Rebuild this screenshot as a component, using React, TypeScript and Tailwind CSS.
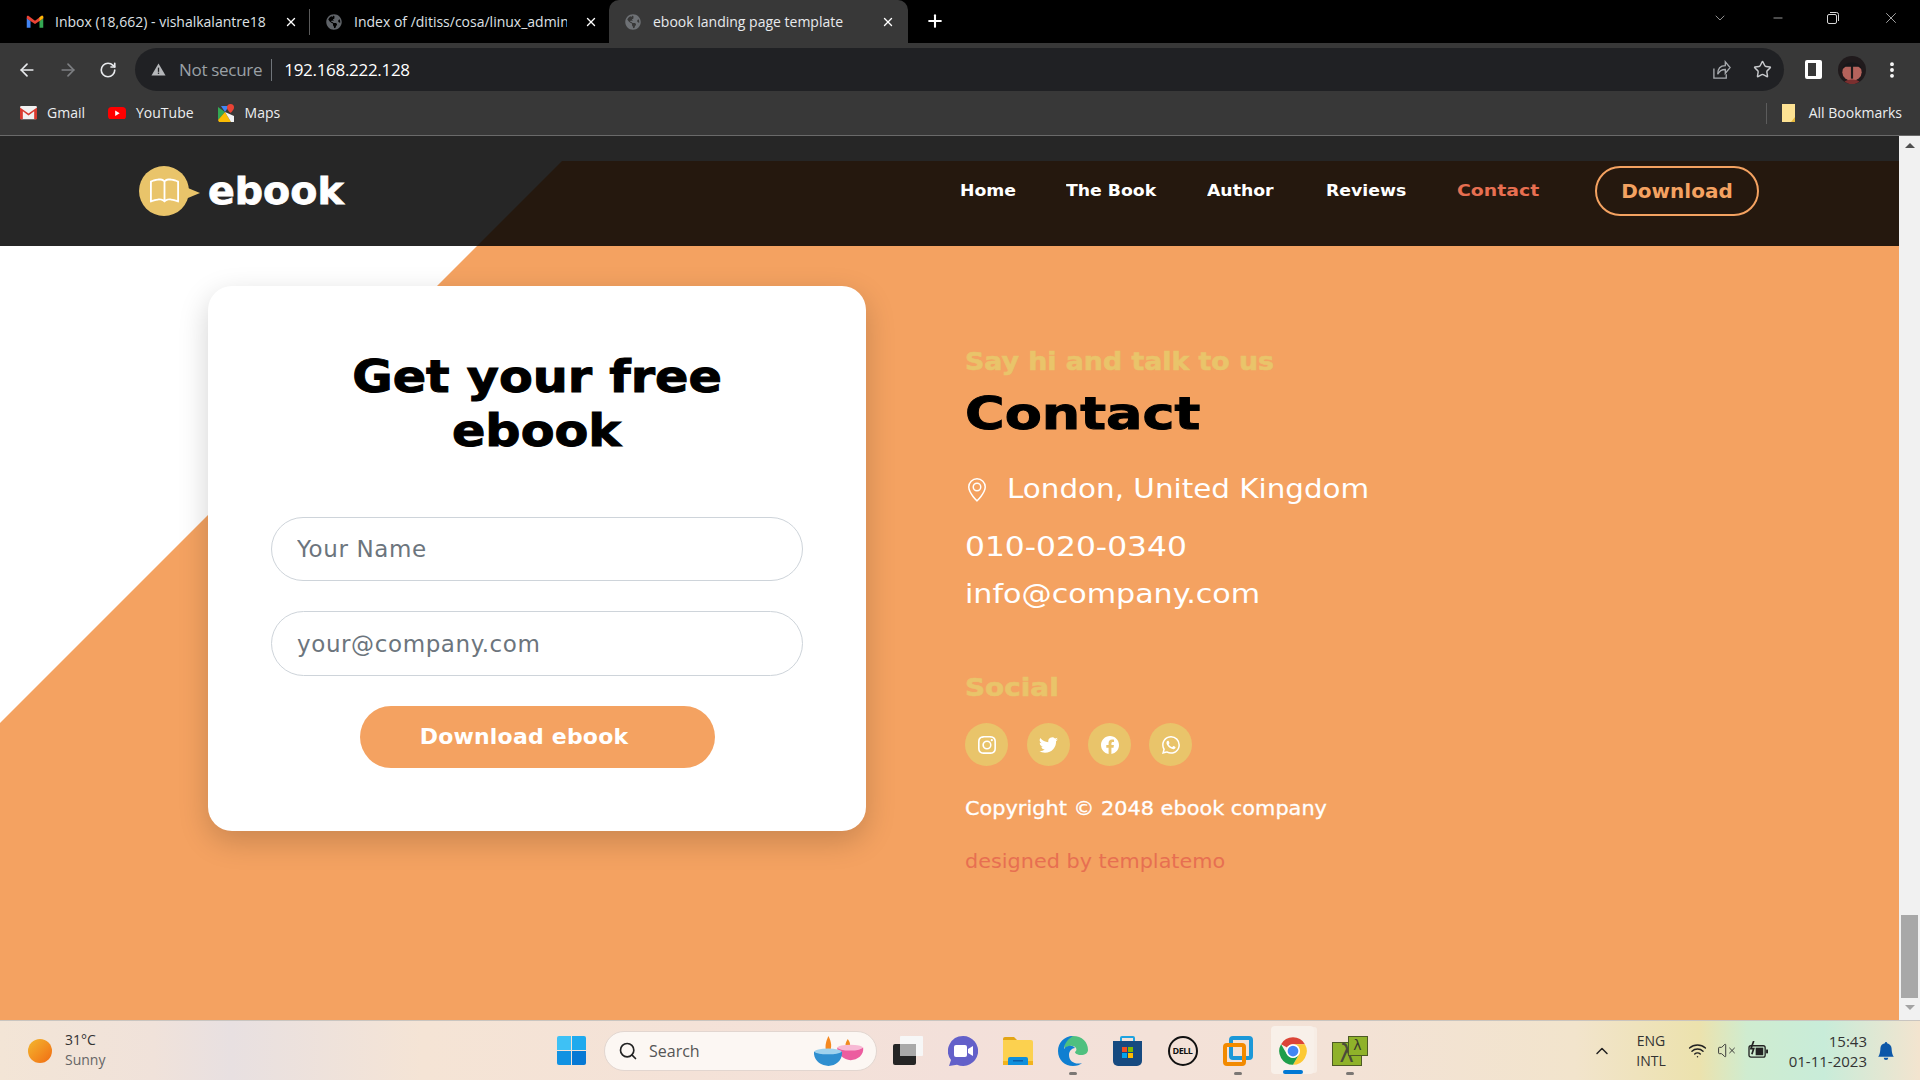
import { ArrowLeft, ArrowRight, ChevronDown, ChevronUp, EllipsisVertical, Minus, Plus, RotateCw, Search, Star, VolumeX, Wifi, X } from "lucide-react";
import { BsBellFill, BsBook, BsFacebook, BsGeoAlt, BsInstagram, BsTwitter, BsWhatsapp } from "react-icons/bs";
import { FaGlobeAmericas } from "react-icons/fa";

const chromeFont = "font-['Open_Sans','Noto_Sans',sans-serif]";
const pageFont = "font-['DejaVu_Sans',sans-serif]";

function GmailMark({ className }: { className?: string }) {
  return (
    <svg viewBox="0 0 24 18" className={className}>
      <path d="M1 17V4l5 4v9z" fill="#4285f4" />
      <path d="M18 17V8l5-4v13z" fill="#34a853" />
      <path d="M1 4.5 12 12l11-7.5V2.500C23 1 21.500 .5 20 1.500L12 7.500 4 1.500C2.500 .5 1 1 1 2.500z" fill="#ea4335" />
      <path d="M18 8l5-4V2.500C23 1 21.500 .5 20 1.500L18 3z" fill="#fbbc04" />
    </svg>
  );
}

function Tab({ title, active, icon, width }: { title: string; active?: boolean; icon: React.ReactNode; width: number }) {
  return (
    <div
      className={`h-[43px] flex items-center shrink-0 pl-[14px] pr-[11px] ${active ? "bg-[#383838] rounded-t-[10px] pr-[13px]" : ""}`}
      style={{ width }}
    >
      <span className="w-[20px] h-[20px] flex items-center justify-center shrink-0">{icon}</span>
      <span className={`ml-[10px] w-[213px] shrink-0 overflow-hidden whitespace-nowrap text-[14px] ${active ? "text-[#e8eaed]" : "text-[#dfe1e5]"}`}>{title}</span>
      <X size={14} strokeWidth={2.4} className="ml-auto text-white shrink-0" />
    </div>
  );
}

function Bookmark({ icon, label }: { icon: React.ReactNode; label: string }) {
  return (
    <div className="flex items-center gap-[10px] mr-[23px]">
      <span className="w-[18px] h-[18px] flex items-center justify-center">{icon}</span>
      <span className="text-[14px] text-[#eceef0] -mt-[2px]">{label}</span>
    </div>
  );
}

function BrowserChrome() {
  return (
    <div className={`${chromeFont} shrink-0`}>
      <div className="h-[43px] bg-black flex items-start">
        <div className="w-[11px] shrink-0" />
        <Tab title="Inbox (18,662) - vishalkalantre18" width={298} icon={<GmailMark className="w-[18px]" />} />
        <div className="w-px h-[26px] mt-[9px] bg-[#5a5a5a] shrink-0" />
        <Tab title="Index of /ditiss/cosa/linux_admin" width={299} icon={<FaGlobeAmericas size={16} className="text-[#5f6368]" />} />
        <Tab active title="ebook landing page template" width={299} icon={<FaGlobeAmericas size={16} className="text-[#6e7175]" />} />
        <Plus size={20} strokeWidth={2.5} className="ml-[17px] mt-[11px] text-white shrink-0" />
        <div className="ml-auto flex items-center h-[36px] text-[#d8d8d8]">
          <ChevronDown size={16} strokeWidth={1} className="mr-[43px]" />
          <Minus size={14} strokeWidth={1.2} className="mr-[41px]" />
          <svg viewBox="0 0 14 14" className="w-[14px] h-[14px] mr-[42px]" fill="none" stroke="currentColor">
            <rect x="1.500" y="3.500" width="9" height="9" rx="1.500" />
            <path d="M4 1.500h6.500a2 2 0 0 1 2 2V10" />
          </svg>
          <X size={18} strokeWidth={1} className="mr-[20px]" />
        </div>
      </div>
      <div className="h-[48px] bg-[#383838] flex items-end pb-0">
        <div className="w-[135px] h-[43px] flex items-center pl-[17px] gap-[21px] text-[#e8eaed] shrink-0">
          <ArrowLeft size={20} strokeWidth={2} />
          <ArrowRight size={20} strokeWidth={2} className="text-[#7d7f82]" />
          <RotateCw size={18} strokeWidth={2.2} />
        </div>
        <div className="w-[1649px] h-[43px] rounded-full bg-[#202124] flex items-center pl-[16px] pr-[12px] shrink-0">
          <svg viewBox="0 0 16 16" className="w-[15px] h-[15px] text-[#b5b7ba]" fill="currentColor">
            <path d="M8 1.500 15.500 14.500H.5z" />
            <rect x="7.300" y="6" width="1.400" height="4.500" fill="#202124" />
            <rect x="7.300" y="11.300" width="1.400" height="1.400" fill="#202124" />
          </svg>
          <span className="ml-[13px] text-[17px] text-[#9aa0a6] tracking-[-0.3px] whitespace-nowrap">Not secure</span>
          <span className="ml-[9px] w-px h-[22px] bg-[#70757a]" />
          <span className="ml-[12px] text-[17px] text-white tracking-[-0.3px]">192.168.222.128</span>
          <svg viewBox="0 0 20 22" className="ml-auto w-[19px] h-[21px] text-[#a8abaf]" fill="none" stroke="currentColor" strokeWidth="1.400">
            <path d="M2 10v10h13v-4" />
            <path d="M6 16c0-6 3-9 8-9V3l5 6-5 6v-4c-4 0-6 1-8 5z" />
          </svg>
          <Star size={19} strokeWidth={1.8} className="ml-[22px] text-[#c7c9cc]" />
        </div>
        <div className="flex-1 h-[43px] flex items-center text-white">
          <div className="ml-[21px] w-[17px] h-[19px] border-[3px] border-white rounded-[2px] border-r-[6px] shrink-0" />
          <svg viewBox="0 0 26 26" className="ml-[16px] w-[28px] h-[28px] shrink-0">
            <circle cx="13" cy="13" r="13" fill="#201a1c" />
            <ellipse cx="13" cy="15" rx="9" ry="8" fill="#b5635c" />
            <rect x="12" y="9" width="2" height="12" fill="#1d1a1b" />
            <path d="M4 12c2-8 16-8 18 0l-3-2H7z" fill="#17171a" />
            <path d="M6 24c3-3 11-3 14 0a13 13 0 0 1-14 0z" fill="#7a2f2f" />
          </svg>
          <EllipsisVertical size={20} strokeWidth={2.6} className="ml-[16px] shrink-0" />
        </div>
      </div>
      <div className="h-[44px] bg-[#383838] flex items-center pl-[19px] pr-[18px]">
        <Bookmark
          label="Gmail"
          icon={
            <svg viewBox="0 0 18 14" className="w-[17px]">
              <rect width="18" height="14" rx="1.500" fill="#f1f1f1" />
              <path d="M0 1.500 9 8l9-6.500V14h-3V5.500L9 10 3 5.500V14H0z" fill="#d93a2f" />
            </svg>
          }
        />
        <Bookmark
          label="YouTube"
          icon={
            <svg viewBox="0 0 20 14" className="w-[19px]">
              <rect width="20" height="14" rx="4" fill="#f00" />
              <path d="M8 4l5 3-5 3z" fill="#fff" />
            </svg>
          }
        />
        <Bookmark
          label="Maps"
          icon={
            <svg viewBox="0 0 18 18" className="w-[18px]">
              <path d="M1 3l7 5-7 8z" fill="#34a853" />
              <path d="M1 16l7-8 6 10H2z" fill="#fbbc04" />
              <path d="M8 8l4-6h-8z" fill="#4285f4" />
              <path d="M8 8l6 10h3V12z" fill="#f1f3f4" />
              <path d="M13.500 0a3.500 3.500 0 0 1 3.500 3.500c0 2.500-3.500 5.500-3.500 5.500S10 6 10 3.500A3.500 3.500 0 0 1 13.500 0z" fill="#ea4335" />
            </svg>
          }
        />
        <div className="ml-auto w-px h-[21px] bg-[#5c5c5c]" />
        <svg viewBox="0 0 16 18" className="ml-[14px] w-[16px] h-[18px]">
          <path d="M1 0h13v18H1z" fill="#fde293" />
          <path d="M14 13v5h-4z" fill="#e6b93a" />
        </svg>
        <span className="ml-[12px] text-[14px] text-[#eceef0] -mt-[2px]">All Bookmarks</span>
      </div>
    </div>
  );
}

function NavLink({ label, width, scale, className }: { label: string; width: string; scale: string; className?: string }) {
  return (
    <a className={`${width} ${className ?? ""}`}>
      <span className={`inline-block origin-left ${scale}`}>{label}</span>
    </a>
  );
}

function SiteHeader() {
  return (
    <header className={`${pageFont} relative h-[110px] bg-black/85 flex items-center`}>
      <div className="pl-[139px] flex items-center">
        <div className="relative w-[50px] h-[50px] rounded-full bg-[#e9c46a] flex items-center justify-center text-white">
          <BsBook size={29} />
          <span className="absolute left-[44px] top-[20px] w-0 h-0 border-y-[7px] border-y-transparent border-l-[17px] border-l-[#e9c46a]" />
        </div>
        <span className="ml-[19px] text-[38px] leading-none font-bold text-white inline-block origin-left scale-x-[1.04] [-webkit-text-stroke:0.8px_white]">ebook</span>
      </div>
      <nav className="ml-auto pr-[140px] flex items-center gap-[50px] text-[16px] font-bold text-white whitespace-nowrap">
        <NavLink label="Home" width="w-[56px]" scale="scale-x-[1.08]" />
        <NavLink label="The Book" width="w-[91px]" scale="scale-x-[1.08]" />
        <NavLink label="Author" width="w-[69px]" scale="scale-x-[1.08]" />
        <NavLink label="Reviews" width="w-[81px]" scale="scale-x-[1.08]" />
        <NavLink label="Contact" width="w-[82px]" scale="scale-x-[1.18]" className="text-[#e76f51]" />
        <a className="ml-[6px] w-[164px] h-[50px] rounded-full border-2 border-[#f4a261] text-[#f4a261] text-[20px] flex items-center justify-center">Download</a>
      </nav>
    </header>
  );
}

function SignupCard() {
  return (
    <form className="w-[658px] h-[545px] shrink-0 bg-white rounded-[24px] shadow-[0_10px_30px_rgba(0,0,0,0.18)] pt-[64px] flex flex-col items-center">
      <h2 className="text-[44px] leading-[54px] font-bold text-black text-center w-full [-webkit-text-stroke:1px_black]">
        <span className="inline-block scale-x-[1.12]">Get your free</span>
        <br />
        <span className="inline-block scale-x-[1.12]">ebook</span>
      </h2>
      <input
        placeholder="Your Name"
        className="mt-[59px] w-[532px] h-[64px] shrink-0 rounded-full border border-[#ced4da] pl-[25px] text-[23px] tracking-[0.6px] text-[#6c757d] placeholder:text-[#6c757d] outline-none"
      />
      <input
        placeholder="your@company.com"
        className="mt-[30px] w-[532px] h-[65px] shrink-0 rounded-full border border-[#ced4da] pl-[25px] text-[23px] tracking-[0.6px] text-[#6c757d] placeholder:text-[#6c757d] outline-none"
      />
      <button type="button" className="mt-[30px] w-[355px] h-[62px] shrink-0 rounded-full bg-[#f4a261] text-white text-[22px] tracking-[0.2px] font-bold pr-[26px] pb-[1px]">
        Download ebook
      </button>
    </form>
  );
}

function SocialLink({ children, className }: { children: React.ReactNode; className: string }) {
  return <a className={`w-[43px] h-[43px] rounded-full bg-[#e9c46a] text-white flex items-center justify-center ${className}`}>{children}</a>;
}

function ContactInfo() {
  return (
    <div className="ml-[99px] pt-[61px] text-white whitespace-nowrap">
      <p className="h-[30px] leading-[30px] text-[24px] font-bold text-[#e9c46a] [-webkit-text-stroke:0.6px_#e9c46a]">
        <span className="inline-block origin-left scale-x-[1.115]">Say hi and talk to us</span>
      </p>
      <h2 className="mt-[10px] h-[54px] leading-[54px] text-[45px] font-bold text-black [-webkit-text-stroke:1px_black]">
        <span className="inline-block origin-left scale-x-[1.2]">Contact</span>
      </h2>
      <p className="mt-[30px] h-[37px] flex items-center text-[26px]">
        <BsGeoAlt size={24} className="mr-[18px]" />
        <span className="inline-block origin-left scale-x-[1.13]">London, United Kingdom</span>
      </p>
      <p className="mt-[21px] h-[36px] leading-[36px] text-[27px]">
        <span className="inline-block origin-left scale-x-[1.16]">010-020-0340</span>
      </p>
      <p className="mt-[11px] h-[36px] leading-[36px] text-[27px]">
        <span className="inline-block origin-left scale-x-[1.116]">info@company.com</span>
      </p>
      <p className="mt-[58px] h-[36px] leading-[36px] text-[25px] font-bold text-[#e9c46a] [-webkit-text-stroke:0.6px_#e9c46a]">
        <span className="inline-block origin-left scale-x-[1.116]">Social</span>
      </p>
      <div className="mt-[17px] h-[43px] flex">
        <SocialLink className=""><BsInstagram size={18} /></SocialLink>
        <SocialLink className="ml-[19px]"><BsTwitter size={19} /></SocialLink>
        <SocialLink className="ml-[18px]"><BsFacebook size={18} /></SocialLink>
        <SocialLink className="ml-[18px]"><BsWhatsapp size={18} /></SocialLink>
      </div>
      <p className="mt-[27px] h-[30px] leading-[30px] text-[19px] [-webkit-text-stroke:0.3px_white]">
        <span className="inline-block origin-left scale-x-[1.097]">Copyright © 2048 ebook company</span>
      </p>
      <p className="mt-[23px] h-[30px] leading-[30px] text-[19px] text-[#e76f51]">
        <span className="inline-block origin-left scale-x-[1.093]">designed by templatemo</span>
      </p>
    </div>
  );
}

function PageScrollbar() {
  return (
    <aside className="w-[21px] shrink-0 bg-[#f1f1f1] flex flex-col items-center">
      <svg viewBox="0 0 12 6" className="mt-[7px] w-[10px] h-[5px] fill-[#505050]"><path d="M6 0l6 6H0z" /></svg>
      <div className="mt-auto w-[17px] h-[83px] bg-[#a8a8a8]" />
      <svg viewBox="0 0 12 6" className="mt-[7px] mb-[10px] w-[10px] h-[5px] fill-[#a3a3a3]"><path d="M0 0h12L6 6z" /></svg>
    </aside>
  );
}

function TaskCell({ children, dot, active }: { children: React.ReactNode; dot?: boolean; active?: boolean }) {
  return (
    <div className="relative w-[55px] h-[59px] shrink-0 flex items-center justify-center">
      {active && <div className="absolute left-[6px] top-[5px] w-[43px] h-[48px] rounded-[4px] bg-[#f8f0e9] shadow-[4px_0_0_-1px_rgba(248,240,233,0.8)]" />}
      <span className="relative flex items-center justify-center">{children}</span>
      {dot && <span className="absolute bottom-[5px] left-[24px] w-[8px] h-[3px] rounded-full bg-[#7b7774]" />}
      {active && <span className="absolute bottom-[6px] left-[18px] w-[20px] h-[4px] rounded-full bg-[#0078d4]" />}
    </div>
  );
}

function Taskbar() {
  return (
    <footer className={`${chromeFont} h-[60px] shrink-0 border-t border-[#c9c5c0] flex items-center text-[#3b3b3b] bg-[linear-gradient(90deg,#f3e5d6_0%,#f0e2da_8%,#e8e0e1_12%,#f5e4d5_22%,#f3e0da_50%,#f3e2d6_70%,#f2e4cc_82%,#ece2ad_88.500%,#cfecd0_91%,#c8ecd9_95%,#f3e4cf_100%)]`}>
      <div className="w-[557px] shrink-0 flex items-center pl-[28px]">
        <div className="w-[24px] h-[24px] rounded-full bg-gradient-to-br from-[#f2b72e] to-[#f06a12]" />
        <div className="ml-[13px] text-[14px] leading-[20px] -mt-[2px]">
          <div className="text-[#333]">31°C</div>
          <div className="text-[#666]">Sunny</div>
        </div>
      </div>
      <svg viewBox="0 0 29 29" className="w-[29px] h-[29px] shrink-0">
        <path d="M0 2a2 2 0 0 1 2-2h12v14H0z" fill="#3ec1f5" />
        <path d="M15 0h12a2 2 0 0 1 2 2v12H15z" fill="#1faaee" />
        <path d="M0 15h14v14H2a2 2 0 0 1-2-2z" fill="#1192e2" />
        <path d="M15 15h14v12a2 2 0 0 1-2 2H15z" fill="#0779d4" />
      </svg>
      <div className="ml-[18px] w-[273px] h-[40px] shrink-0 rounded-full bg-[#fcf7f3] border border-[#e2d6d0] flex items-center pl-[13px] pr-[8px]">
        <Search size={20} strokeWidth={2} className="text-[#222]" />
        <span className="ml-[11px] text-[16px] text-[#555]">Search</span>
        <svg viewBox="0 0 56 32" className="ml-auto w-[54px] h-[31px]">
          <path d="M35 4c3 4 3 7 1 9h-3c-1-3 0-6 2-9z" fill="#f08a1f" />
          <path d="M24 13c6 3 20 3 27 0 1 8-6 13-13 13S24 20 24 13z" fill="#ec5c9f" />
          <ellipse cx="37.500" cy="13" rx="13" ry="3" fill="#f7b9d4" />
          <path d="M15 1c3 6 4 12 1 17h-3c-2-5-1-11 2-17z" fill="#f5881f" />
          <path d="M0 17c6 3 23 3 29 0 1 9-6 15-14 15S-1 26 0 17z" fill="#2f8fd0" />
          <ellipse cx="14.500" cy="17" rx="14" ry="3" fill="#9fd2ee" />
        </svg>
      </div>
      <div className="ml-[3px] flex items-center shrink-0">
        <TaskCell>
          <svg viewBox="0 0 30 29" className="w-[30px] h-[29px]">
            <rect x="0" y="8" width="23" height="21" rx="2" fill="#252525" />
            <rect x="7" y="0" width="23" height="20" rx="1" fill="#f7f7f7" />
            <rect x="7" y="8" width="16" height="12" fill="#a9a9a9" />
          </svg>
        </TaskCell>
        <TaskCell>
          <svg viewBox="0 0 30 30" className="w-[30px] h-[30px]">
            <path d="M15 0a15 15 0 1 1-6 28.700L1 30l2-6A15 15 0 0 1 15 0z" fill="#6360c9" />
            <rect x="6" y="9" width="13" height="12" rx="2" fill="#fff" />
            <path d="M20 13l5-3v10l-5-3z" fill="#fff" />
          </svg>
        </TaskCell>
        <TaskCell>
          <svg viewBox="0 0 30 28" className="w-[30px] h-[28px]">
            <path d="M0 2a2 2 0 0 1 2-2h9l3 3h-14z" fill="#e3a514" />
            <path d="M0 3h28a2 2 0 0 1 2 2v23H0z" fill="#fcd14f" />
            <path d="M0 24h30v4H0z" fill="#f2b31c" />
            <path d="M5 22a2 2 0 0 1 2-2h16a2 2 0 0 1 2 2v6H5z" fill="#0f8fdc" />
            <rect x="10" y="23" width="10" height="1.500" fill="#0a5fa8" />
          </svg>
        </TaskCell>
        <TaskCell dot>
          <svg viewBox="0 0 30 30" className="w-[30px] h-[30px]">
            <path d="M15 0C24 0 30 6 30 14c0 3-3 5-7 5-4 0-6-2-6-3 1-1 2-2 1-4-2-3-8-3-11 1C4 8 9 0 15 0z" fill="#4fc07f" />
            <path d="M15 0C6 0 0 7 0 15c0 9 7 15 15 15 4 0 7-1 9-3-6 2-13-1-13-8 0-4 3-7 6-7-2-3-8-3-11 1 0-5 4-10 9-13z" fill="#0f7fd1" />
          </svg>
        </TaskCell>
        <TaskCell>
          <svg viewBox="0 0 29 30" className="w-[29px] h-[30px]">
            <path d="M8 5V2a1 1 0 0 1 1-1h11a1 1 0 0 1 1 1v3" fill="none" stroke="#1fa3e0" strokeWidth="2" />
            <path d="M0 5h29v20a5 5 0 0 1-5 5H5a5 5 0 0 1-5-5z" fill="#164a80" />
            <rect x="9" y="11" width="5" height="5" fill="#f25022" />
            <rect x="15" y="11" width="5" height="5" fill="#7fba00" />
            <rect x="9" y="17" width="5" height="5" fill="#00a4ef" />
            <rect x="15" y="17" width="5" height="5" fill="#ffb900" />
          </svg>
        </TaskCell>
        <TaskCell>
          <div className="w-[30px] h-[30px] rounded-full border-2 border-[#111] flex items-center justify-center text-[9px] font-bold text-[#111] tracking-[-0.5px]">DELL</div>
        </TaskCell>
        <TaskCell dot>
          <svg viewBox="0 0 30 30" className="w-[30px] h-[30px]" fill="none">
            <rect x="8" y="2" width="20" height="20" rx="2" stroke="#1b98d8" strokeWidth="4" />
            <rect x="2" y="9" width="19" height="19" rx="2" stroke="#f28a00" strokeWidth="4" />
          </svg>
        </TaskCell>
        <TaskCell active>
          <svg viewBox="0 0 24 24" className="w-[30px] h-[30px]">
            <path d="M2.470 6.500A11 11 0 0 1 21.530 6.500H12A5.500 5.500 0 0 0 7.240 9.250Z" fill="#db4437" />
            <path d="M21.530 6.500A11 11 0 0 1 12 23L16.760 14.750A5.500 5.500 0 0 0 12 6.500Z" fill="#fcc934" />
            <path d="M12 23A11 11 0 0 1 2.470 6.500L7.240 14.750A5.500 5.500 0 0 0 16.760 14.750Z" fill="#1e9e4a" />
            <circle cx="12" cy="12" r="5.500" fill="#fff" />
            <circle cx="12" cy="12" r="4.300" fill="#4285f4" />
          </svg>
        </TaskCell>
        <div className="w-[2px] shrink-0" />
        <TaskCell dot>
          <div className="relative w-[36px] h-[30px]">
            <div className="absolute left-0 bottom-0 w-[30px] h-[24px] bg-[#8fb22a] border border-[#4d5a25] text-[#4a4a3a] text-[24px] leading-[22px] text-center font-['DejaVu_Sans',sans-serif]">λ</div>
            <div className="absolute right-0 top-0 w-[20px] h-[20px] bg-[#8fb22a] border border-[#4d5a25] text-[#3a3a2a] text-[14px] leading-[17px] text-center font-['DejaVu_Sans',sans-serif]">λ</div>
          </div>
        </TaskCell>
      </div>
      <div className="ml-auto flex items-center pr-[25px]">
        <ChevronUp size={20} strokeWidth={1.8} className="text-[#222]" />
        <div className="ml-[19px] w-[40px] text-center text-[14px] leading-[20px] text-[#333]">
          <div>ENG</div>
          <div>INTL</div>
        </div>
        <Wifi size={19} strokeWidth={1.8} className="ml-[17px] text-[#222]" />
        <VolumeX size={19} strokeWidth={1.2} className="ml-[10px] text-[#333]" />
        <svg viewBox="0 0 22 20" className="ml-[12px] w-[21px] h-[19px]" fill="none" stroke="#222" strokeWidth="1.400">
          <rect x="1" y="5" width="17" height="12" rx="2" />
          <rect x="19" y="9" width="2" height="4" fill="#222" stroke="none" />
          <rect x="8" y="7" width="8" height="8" fill="#222" stroke="none" />
          <path d="M6 0 3 8h3l-2 6" strokeWidth="1.800" />
        </svg>
        <div className="ml-[18px] w-[80px] text-right text-[15px] leading-[20px] text-[#333] whitespace-nowrap">
          <div>15:43</div>
          <div>01-11-2023</div>
        </div>
        <BsBellFill size={18} className="ml-[10px] text-[#0c57a8]" />
      </div>
    </footer>
  );
}

export default function App() {
  return (
    <div className="w-[1920px] h-[1080px] overflow-hidden flex flex-col bg-white">
      <BrowserChrome />
      <div className="h-px shrink-0 bg-[#6a6a6a]" />
      <div className="flex-1 flex min-h-0">
        <main className={`${pageFont} relative flex-1 bg-white overflow-hidden`}>
          {/* diagonal orange band behind the header and the form */}
          <div className="absolute inset-0 bg-[#f4a261] [clip-path:polygon(562px_25px,100%_25px,100%_100%,0_100%,0_587px)]" />
          <SiteHeader />
          <section className="relative pl-[208px] pt-[40px] flex items-start">
            <SignupCard />
            <ContactInfo />
          </section>
        </main>
        <PageScrollbar />
      </div>
      <Taskbar />
    </div>
  );
}
